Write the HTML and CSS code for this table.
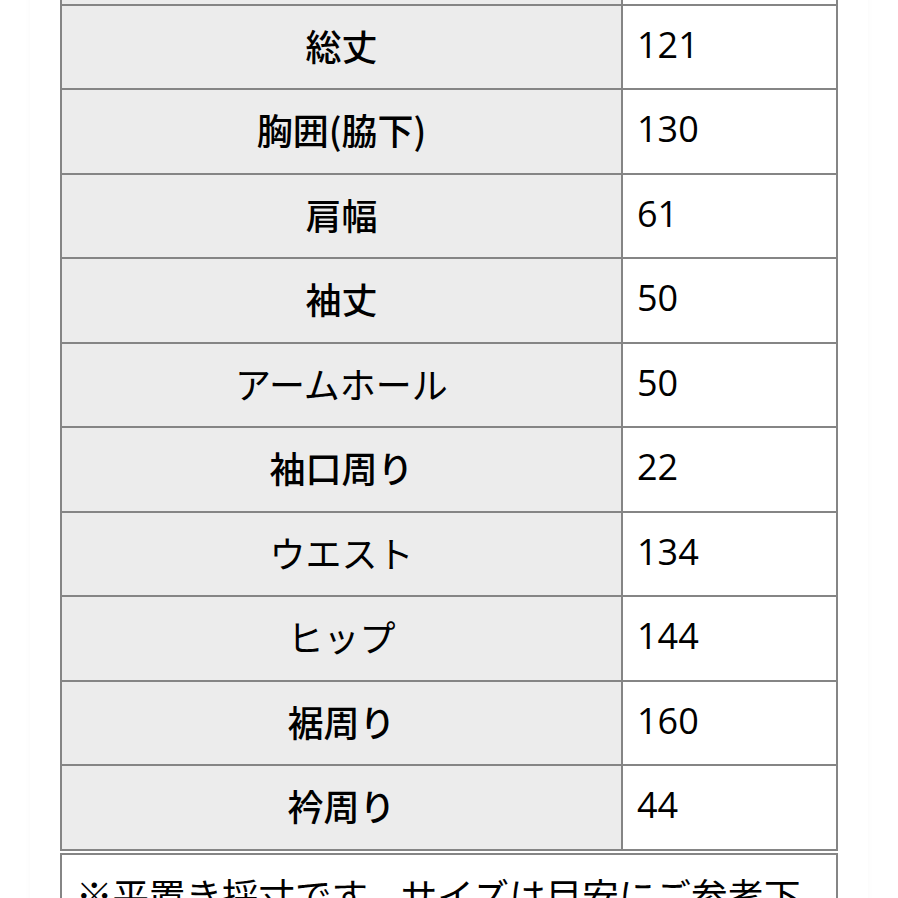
FILE: index.html
```html
<!DOCTYPE html>
<html lang="ja">
<head>
<meta charset="utf-8">
<title>サイズ表</title>
<link rel="stylesheet" href="styles.css">
</head>
<body>
<div class="page">
  <table class="size-table">
    <tbody>
      <tr class="row-cut"><th class="label">サイズ</th><td class="value">F</td></tr>
      <tr><th class="label">総丈</th><td class="value">121</td></tr>
      <tr><th class="label">胸囲(脇下)</th><td class="value">130</td></tr>
      <tr><th class="label">肩幅</th><td class="value">61</td></tr>
      <tr><th class="label">袖丈</th><td class="value">50</td></tr>
      <tr><th class="label regular">アームホール</th><td class="value">50</td></tr>
      <tr><th class="label">袖口周り</th><td class="value">22</td></tr>
      <tr><th class="label regular">ウエスト</th><td class="value">134</td></tr>
      <tr><th class="label regular">ヒップ</th><td class="value">144</td></tr>
      <tr><th class="label">裾周り</th><td class="value">160</td></tr>
      <tr><th class="label">衿周り</th><td class="value">44</td></tr>
    </tbody>
  </table>
  <div class="note">※平置き採寸です。サイズは目安にご参考下さい。</div>
</div>
</body>
</html>
```

FILE: styles.css
```css
html, body {
  margin: 0;
  padding: 0;
  background: #ffffff;
}

body {
  height: 898px;
  overflow: hidden;
  font-family: "Open Sans", "Noto Sans CJK JP", sans-serif;
  color: #000000;
}

.page {
  margin-left: 30px;
  width: 778px;
  padding: 0 30px;
  min-height: 1000px;
  box-shadow: 0 0 6px rgba(0, 0, 0, 0.035);
}

.size-table {
  width: 778px;
  margin-top: -81px;
  border-collapse: collapse;
  table-layout: fixed;
}

.size-table th,
.size-table td {
  height: 78.5px;
  padding: 0 0 4px 0;
  border: 2px solid #858585;
  font-size: 36px;
  line-height: 1;
}

.label {
  width: 559px;
  background: #ececec;
  text-align: center;
  font-family: "Noto Sans CJK JP", sans-serif;
  font-weight: 500;
}

.label.regular {
  font-weight: 400;
}

.value {
  background: #ffffff;
  text-align: left;
  padding-left: 14px !important;
  font-weight: 400;
}

.note {
  margin-top: 2px;
  border: 2px solid #858585;
  padding: 16px 24px 20px 14px;
  font-family: "Noto Sans CJK JP", sans-serif;
  font-size: 36.5px;
  line-height: 1.3;
}
```
